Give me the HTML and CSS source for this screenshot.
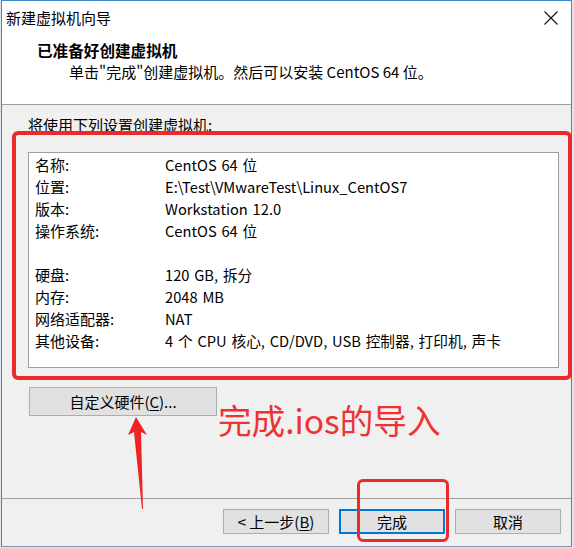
FILE: index.html
```html
<!DOCTYPE html>
<html lang="zh-CN">
<head>
<meta charset="utf-8">
<title>新建虚拟机向导</title>
<link rel="stylesheet" href="styles.css">
</head>
<body>
<div class="window">
  <div class="titlebar">
    <span class="title">新建虚拟机向导</span>
    <svg class="close" width="14" height="14" viewBox="0 0 14 14"><path d="M0.5 0.5 L13.5 13.5 M13.5 0.5 L0.5 13.5" stroke="#111" stroke-width="1.1" fill="none"/></svg>
  </div>
  <div class="header">
    <div class="h1">已准备好创建虚拟机</div>
    <div class="sub">单击"完成"创建虚拟机。然后可以安装 CentOS 64 位。</div>
  </div>
  <div class="content">
    <div class="label">将使用下列设置创建虚拟机:</div>
    <div class="infobox">
      <div class="row"><span class="k">名称:</span><span class="v">CentOS 64 位</span></div>
      <div class="row"><span class="k">位置:</span><span class="v">E:\Test\VMwareTest\Linux_CentOS7</span></div>
      <div class="row"><span class="k">版本:</span><span class="v">Workstation 12.0</span></div>
      <div class="row"><span class="k">操作系统:</span><span class="v">CentOS 64 位</span></div>
      <div class="row"></div>
      <div class="row"><span class="k">硬盘:</span><span class="v">120 GB, 拆分</span></div>
      <div class="row"><span class="k">内存:</span><span class="v">2048 MB</span></div>
      <div class="row"><span class="k">网络适配器:</span><span class="v">NAT</span></div>
      <div class="row"><span class="k">其他设备:</span><span class="v">4 个 CPU 核心, CD/DVD, USB 控制器, 打印机, 声卡</span></div>
    </div>
    <div class="btn custom">自定义硬件(<u>C</u>)...</div>
  </div>
  <div class="footer">
    <div class="btn">&lt; 上一步(<u>B</u>)</div>
    <div class="btn primary">完成</div>
    <div class="btn">取消</div>
  </div>

  <div class="mark mark-box"></div>
  <div class="mark mark-finish"></div>
  <div class="note">完成.ios的导入</div>
  <svg class="arrow" width="24" height="96" viewBox="0 0 24 96"><polygon points="10,0 21,18 15,15 17,92 16,92 8,15 2,18" fill="#ee2424"/></svg>
</div>
</body>
</html>
```

FILE: styles.css
```css
* { box-sizing: border-box; }
html, body { margin: 0; padding: 0; }
body {
  background: #dfe6ee;
  font-family: "Noto Sans CJK SC", "Microsoft YaHei", sans-serif;
  color: #000;
  width: 574px;
  height: 548px;
  overflow: hidden;
}
.window {
  position: relative;
  margin-left: 1px;
  width: 571px;
  height: 547px;
  border: 1px solid #3d86c9;
  border-bottom-color: #7d93aa;
  background: #f0f0f0;
  display: flex;
  flex-direction: column;
}
.titlebar {
  height: 31px;
  background: #fff;
  display: flex;
  align-items: center;
  justify-content: space-between;
  padding: 0 13px 0 4px;
}
.title { font-size: 15px; line-height: 18px; margin-top: 2px; }
.close { display: block; margin-top: 2px; }
.header {
  height: 73px;
  background: #fff;
  border-bottom: 1px solid #a0a0a0;
  padding-top: 8px;
}
.h1 {
  font-size: 15.6px;
  font-weight: bold;
  line-height: 20px;
  padding-left: 35px;
}
.sub {
  font-size: 15px;
  line-height: 20px;
  padding-left: 67px;
  margin-top: 2px;
}
.content {
  height: 393px;
  padding: 11px 0 0 26px;
}
.label { font-size: 15px; line-height: 18px; padding-left: 0; }
.infobox {
  margin-top: 18px;
  width: 531px;
  height: 216px;
  background: #fff;
  border: 1px solid #a0a0a0;
  padding: 1px 0 0 6px;
}
.row {
  height: 22px;
  line-height: 22px;
  font-size: 15px;
  display: flex;
}
.k { width: 130px; flex: none; }
.v { font-size: 14.7px; word-spacing: 1.5px; }
.btn {
  background: #e1e1e1;
  border: 1px solid #adadad;
  font-size: 15px;
  display: flex;
  align-items: center;
  justify-content: center;
}
.btn u { text-underline-offset: 2px; }
.custom {
  margin-top: 19px;
  margin-left: 1px;
  width: 188px;
  height: 29px;
}
.footer {
  border-top: 1px solid #a0a0a0;
  flex: 1;
  display: flex;
  justify-content: flex-end;
  gap: 10px;
  padding: 10px 10px 0 0;
}
.footer .btn { width: 106px; height: 25px; }
.footer .primary { border: 2px solid #0078d7; }
.mark {
  position: absolute;
  border: 4px solid #ec2a2a;
  border-radius: 6px;
}
.mark-box { left: 10px; top: 130px; width: 560px; height: 249px; }
.mark-finish { left: 355px; top: 478px; width: 92px; height: 63px; border-width: 3.5px; }
.note {
  position: absolute;
  left: 216px;
  top: 395px;
  font-size: 33.6px;
  line-height: 48px;
  color: #ee3232;
  white-space: nowrap;
}
.arrow { position: absolute; left: 124px; top: 416px; }
```
